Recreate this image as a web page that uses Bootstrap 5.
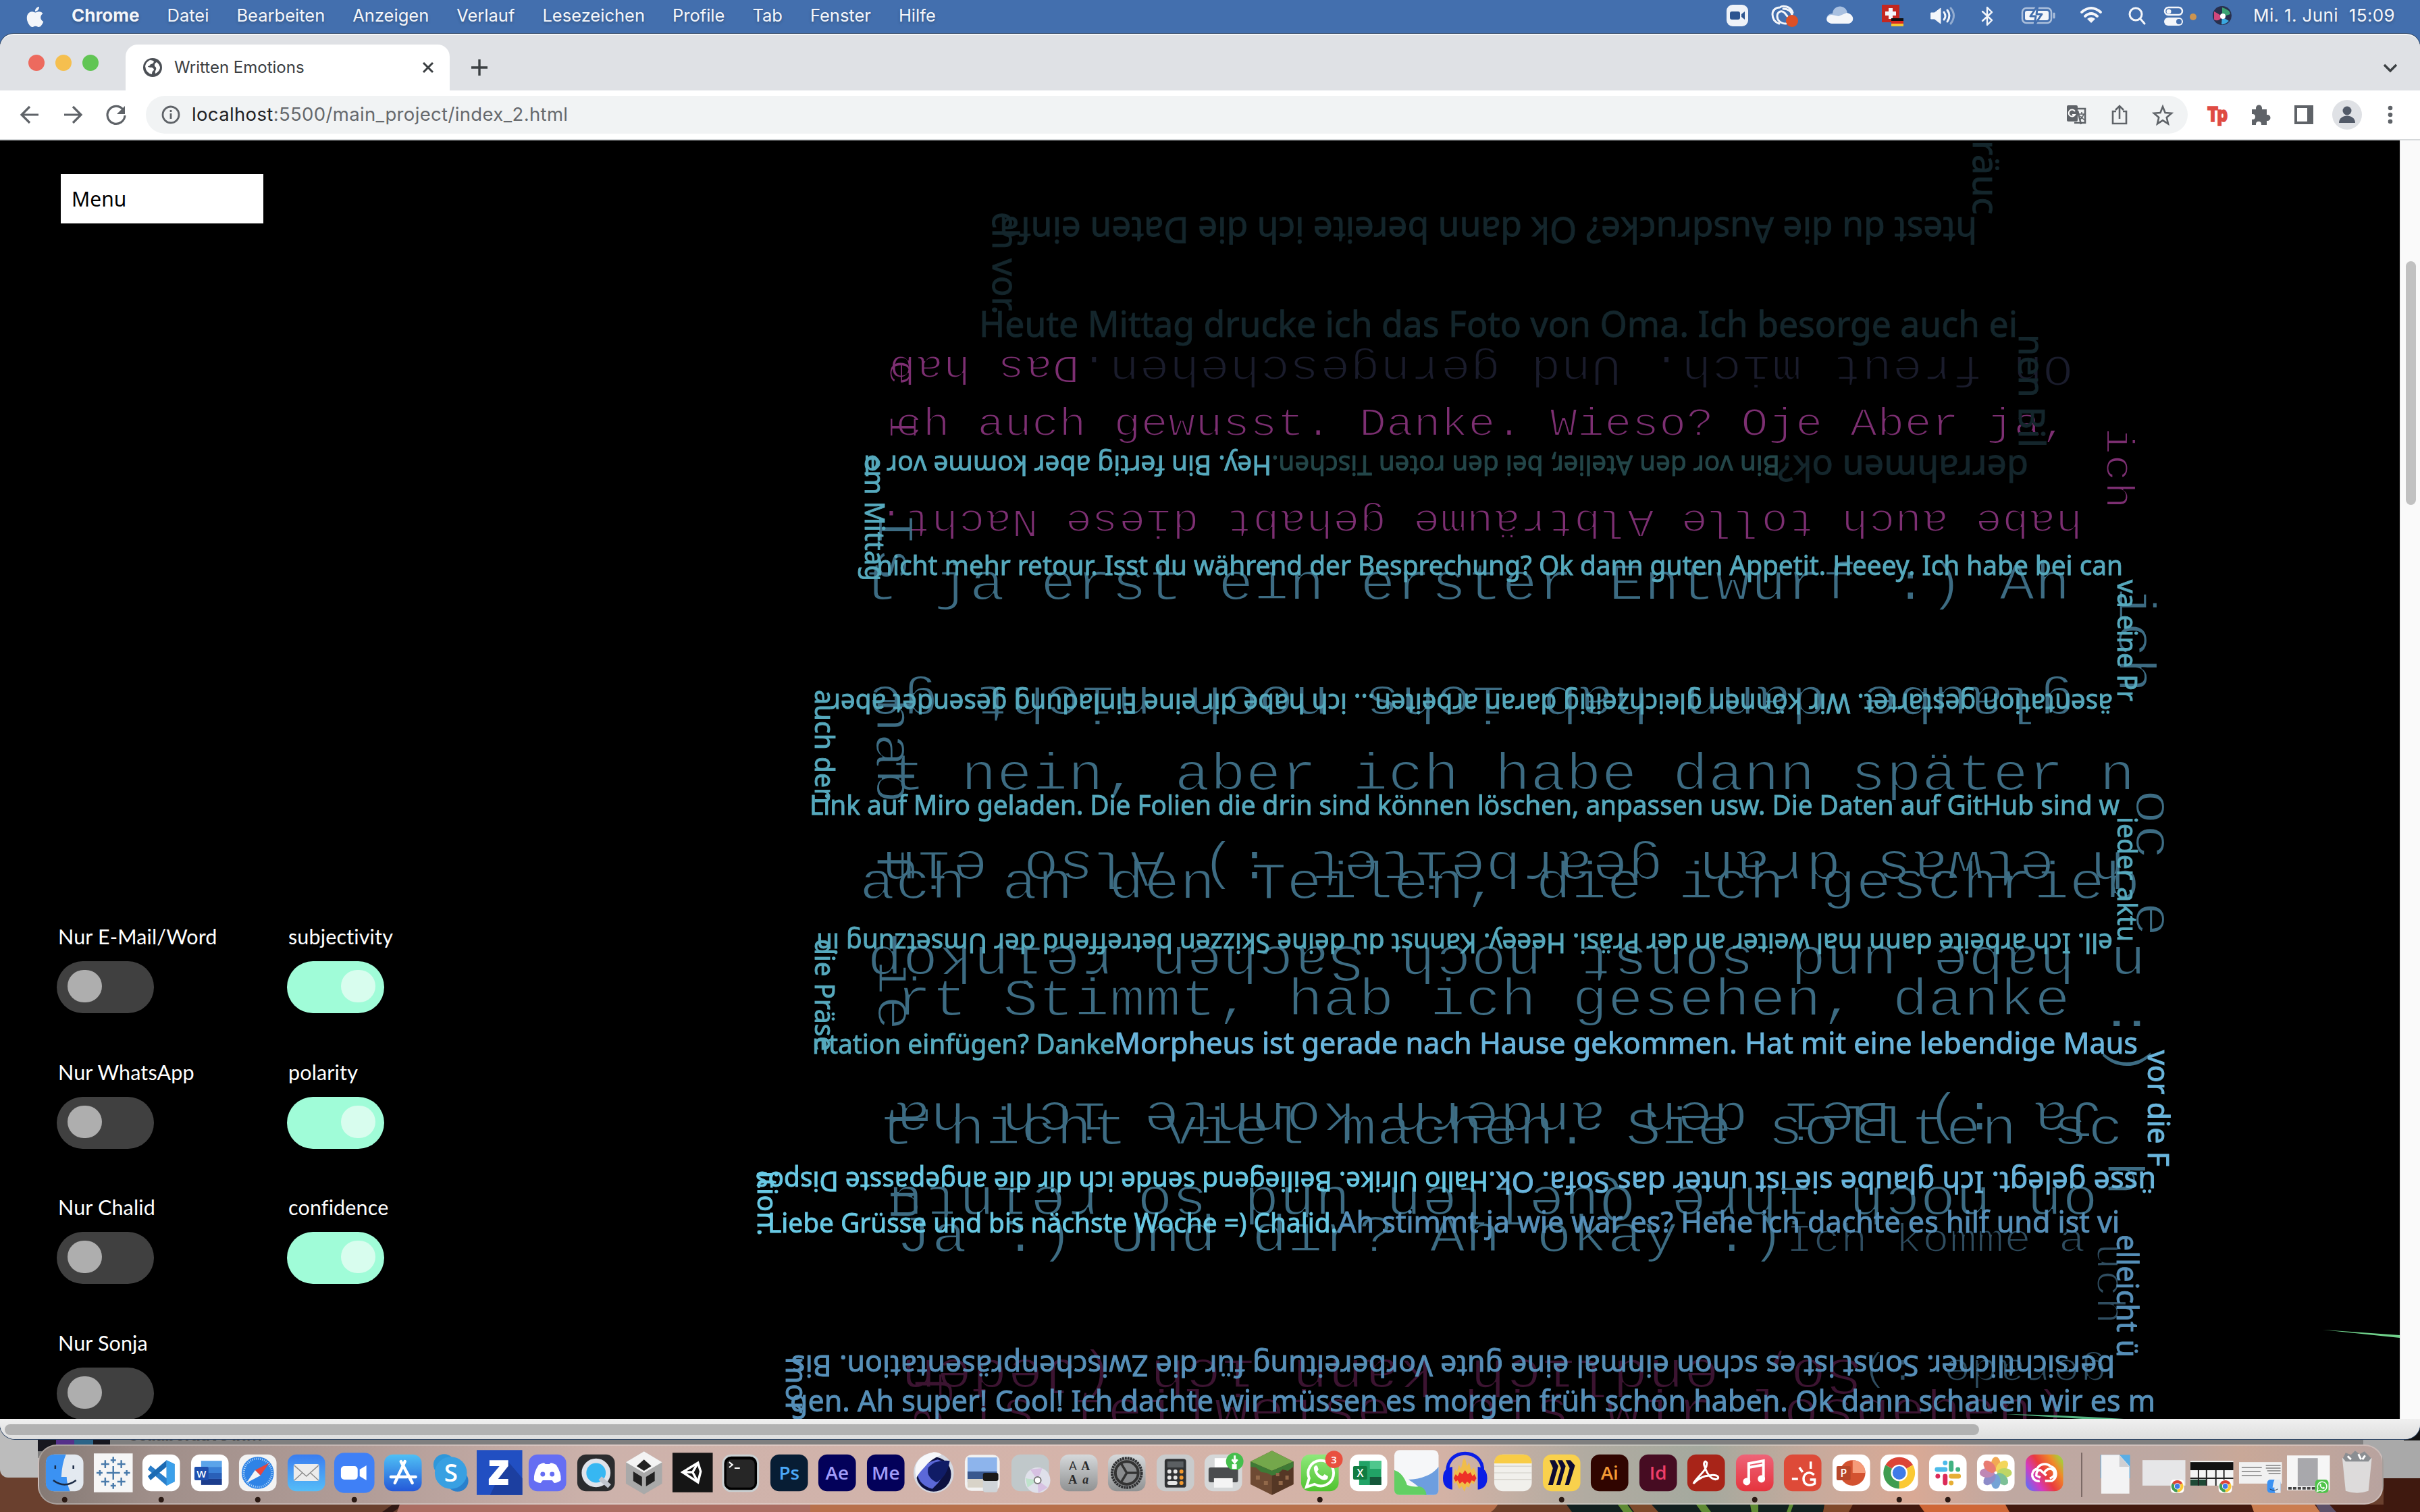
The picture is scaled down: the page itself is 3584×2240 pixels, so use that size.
<!DOCTYPE html>
<html lang="de">
<head>
<meta charset="utf-8">
<title>Written Emotions</title>
<link rel="stylesheet" href="https://cdn.jsdelivr.net/npm/bootstrap@5.3.0/dist/css/bootstrap.min.css">
<script src="https://cdn.jsdelivr.net/npm/bootstrap@5.3.0/dist/js/bootstrap.bundle.min.js"></script>
<style>
body{width:3584px;height:2240px;overflow:hidden;font-family:Inter,"Liberation Sans",sans-serif;background:#663f2d}
svg{display:block;flex:none}
.desktop{left:0;top:0;z-index:0}
.screen{z-index:1;width:3584px;height:2240px}
.osbar{height:50px;background:#436fae;color:#f4f6fa;font-size:25.5px;line-height:46px;padding:0 37px 4px 37px;text-shadow:0 2px 4px rgba(0,0,0,.25);white-space:nowrap}
.osbar .apple{width:30px;height:36px;margin-right:39px;margin-top:4px}
.osbar .entry{display:block;margin-right:41px}
.osbar b.entry{font-size:26px}
.osbar .clock{margin-left:16px;font-size:26px;letter-spacing:.35px}
.win{height:2082px;border-radius:20px 20px 22px 22px;overflow:hidden;background:#f3f3f3;border-top:2px solid #f6f7f8;box-shadow:0 0 0 1px #2e4565}
.tabstrip{height:82px;background:#dfe1e5;padding-top:14px}
.lights{width:186px;padding:15px 0 0 42px;gap:16px}
.light{width:24px;height:24px;border-radius:50%}
.ctab{width:480px;height:68px;background:#fff;border-radius:18px 18px 0 0;padding:0 22px 0 25px;font-size:24px;color:#3c4043}
.toolbar2{height:74px;background:#fff;border-bottom:2px solid #d5d8da;padding:0 0 0 24px}
.omni{width:3024px;height:56px;border-radius:28px;background:#f1f3f4;padding-left:22px;font-size:27.5px;color:#66696d;margin-top:-1px}
.pagebox{height:1894px}
.page{width:3554px;background:#000;color:#fff;position:relative;overflow:hidden}
.rail{width:30px;background:#fafafa;border-left:1px solid #e4e4e4;padding:179px 0 0 8px}
.rail .thumb{width:15px;height:361px;border-radius:8px;background:#c1c1c1}
.hrail{height:30px;background:linear-gradient(#f0f0f0,#dedede);padding:8px 0 0 7px}
.hrail .thumb{width:2924px;height:16px;border-radius:8px;background:#b2b2b2}
.controls{padding:50px 0 0 84px}
.menubox{width:300px;height:73px;margin-left:6px;background:#fff;color:#000;font:30px "Noto Sans",sans-serif;line-height:73px;padding-left:16px}
.switches{margin-top:1031px;font-family:Lato,sans-serif;font-size:30.5px}
.switchcol{width:341px}
.sw{height:200.7px}
.sw .cap{height:62px;line-height:50px;padding-left:2px;white-space:nowrap;letter-spacing:.15px}
.tog{width:144px;height:77px;border-radius:39px;background:#404040;padding:13px 0 0 16px}
.tog i{display:block;width:51px;height:48px;border-radius:24px;background:#aeaeae}
.tog.lit{background:#a0fcd8;padding-left:80px}
.tog.lit i{background:#d8fdee}
.poem{left:0;top:0;isolation:isolate}
.sn{font-family:"Noto Sans",sans-serif;stroke-width:.9}
/* the black outline thins the monospace strokes; lighten drops it again where lines cross */
.mo{font-family:"Liberation Mono",monospace;stroke:#000;stroke-width:2.2}
.mo text{mix-blend-mode:lighten}
.dock{height:89px;margin:8px 54px 0 56px;border-radius:28px;border:2px solid rgba(255,255,255,.28);padding-left:2px;
background:linear-gradient(90deg,#857a75 0,#a08f8a 5%,#b29d98 14%,#cdb2ab 24%,#d5b4aa 45%,#d3b2a5 60%,#b1aba1 66%,#a4a99e 71%,#c8aa9c 76%,#d9a995 80%,#bfa8a1 84%,#bda8a2 91%,#c9a898 94%,#b8a39f 100%)}
.dock svg{width:71.5px;height:90px;margin-top:-2px}
.dock text{font-family:"Open Sans",sans-serif;font-weight:600;text-anchor:middle}
</style>
</head>
<body>
<svg class="desktop position-absolute" width="3584" height="2240">
<rect width="3584" height="2240" fill="#436fae"/>
<rect y="2080" width="3584" height="160" fill="#6a402e"/>
<rect y="2070" width="80" height="119" rx="12" fill="#bcbcbc"/>
<rect x="56" y="2100" width="3528" height="60" fill="#7f7f7f"/>
<rect x="3500" y="2100" width="84" height="90" fill="#a9a9a9"/>
<path d="M3560 2100h24v34h-24z" fill="#111"/>
<rect x="56" y="2100" width="107" height="50" fill="#17171f"/><rect x="83" y="2120" width="28" height="30" fill="#55308a"/><rect x="110" y="2120" width="28" height="30" fill="#2b6488"/>
<text x="190" y="2134" font-family="Inter,sans-serif" font-weight="700" font-size="25" fill="#2e2e2e" textLength="199">collaborative in…</text>
<path d="M580 2230l24-2h-4l-18 12h-16z" fill="#311814"/><path d="M602 2200H1500V2240H588z" fill="#ab6d62"/>
<path d="M1200 2200H2240L2210 2240H1200z" fill="#b8704b"/><path d="M2222 2229h150v11h-164z" fill="#6d3f28"/>
<path d="M2320 2229h420v11h-412z" fill="#12201f"/><path d="M2396 2229h14l8 11h-14zM2512 2229h14l8 11h-14zM2592 2229h12v11h-10zM2650 2229h6l-4 11h-6z" fill="#5f8b34"/><path d="M2412 2229h34l10 11h-36z" fill="#7d4a2b"/>
<path d="M2702 2229H3584V2240H2700z" fill="#43190e"/><path d="M2702 2229h42l-6 11h-38z" fill="#80492b"/><path d="M2842 2229h128l6 11h-126z" fill="#cf6737"/><path d="M3334 2229h94l8 11h-98z" fill="#cb7d50"/><path d="M3430 2229h20l10 11h-24z" fill="#5d5068"/>
<path d="M3530 2190h54v50h-54z" fill="#3f190f"/>
</svg>
<div class="screen position-relative d-flex flex-column">

<nav class="osbar d-flex align-items-center">
<svg class="apple" viewBox="0 0 16 16"><path fill="#f4f6fa" d="M11.182.008C11.148-.03 9.923.023 8.857 1.18c-1.066 1.156-.902 2.482-.878 2.516s1.52.087 2.475-1.258.762-2.391.728-2.43m3.314 11.733c-.048-.096-2.325-1.234-2.113-3.422s1.675-2.789 1.698-2.854-.597-.79-1.254-1.157a3.7 3.7 0 0 0-1.563-.434c-.108-.003-.483-.095-1.254.116-.508.139-1.653.589-1.968.607-.316.018-1.256-.522-2.267-.665-.647-.125-1.333.131-1.824.328-.49.196-1.422.754-2.074 2.237-.652 1.482-.311 3.83-.067 4.56s.625 1.924 1.273 2.796c.576.984 1.34 1.667 1.659 1.899s1.219.386 1.843.067c.502-.308 1.408-.485 1.766-.472.357.013 1.061.154 1.782.539.571.197 1.111.115 1.652-.105.541-.221 1.324-1.059 2.238-2.758q.52-1.185.473-1.282"/></svg>
<b class="entry">Chrome</b><span class="entry">Datei</span><span class="entry">Bearbeiten</span><span class="entry">Anzeigen</span><span class="entry">Verlauf</span><span class="entry">Lesezeichen</span><span class="entry">Profile</span><span class="entry">Tab</span><span class="entry">Fenster</span><span class="entry">Hilfe</span>
<svg class="ms-auto" width="780" height="46" viewBox="2540 1 780 46" fill="none" stroke="#f4f6fa" stroke-width="3" stroke-linecap="round" stroke-linejoin="round">
<rect x="2556" y="8" width="32" height="32" rx="9" fill="#eef2f8" stroke="none"/><rect x="2561" y="18" width="15" height="12" rx="3" fill="#2d5590" stroke="none"/><path d="M2578 22l5-4v12l-5-4z" fill="#2d5590" stroke="none"/>
<path d="M2634 36c-6-2-10-7-10-14 0-6 5-10 11-10 3-3 16-3 19 8M2644 36c-8 0-13-5-13-11s6-10 11-5l4 5M2640 14c6 0 12 3 13 9"/><circle cx="2653" cy="32" r="9" fill="#dd5026" stroke="none"/>
<path d="M2712 36c-12-2-9-15 1-15 1-14 21-14 22 0 10 1 11 14 1 15z" fill="#a9c0e0" stroke="none"/><path d="M2712 36c-12-2-8-13 0-13l10 2 12-5c12 2 12 15 2 16z" fill="#f4f6fa" stroke="none"/>
<rect x="2786" y="8" width="26" height="26" fill="#c5271f" stroke="none"/><path d="M2799 13v16M2791 21h16" stroke-width="6" stroke-linecap="butt"/><path d="M2800 28h18v4h-18z" fill="#111" stroke="none"/><path d="M2800 32h18v4h-18z" fill="#d8281f" stroke="none"/><path d="M2800 36h18v4h-18z" fill="#f2c733" stroke="none"/>
<path d="M2859 20h5l9-7v23l-9-7h-5z" fill="#f4f6fa" stroke-width="1"/><path d="M2878 19q4 6 0 11M2883 16q6 8 0 17"/><path d="M2888 13q9 11 0 23" opacity=".45"/>
<path d="M2935 18l14 13-7 7V12l7 7-14 13" stroke-width="2.4"/>
<rect x="2994" y="13" width="43" height="22" rx="6" opacity=".6" stroke-width="2.5"/><rect x="2998" y="17" width="35" height="14" rx="3" fill="#f4f6fa" stroke="none"/><path d="M3041 21v6" opacity=".6"/><path d="M3017 9l-11 16h8l-2 13 11-16h-8z" fill="#f4f6fa" stroke="#436fae"/>
<path d="M3082 19q14-12 28 0M3087 25q9-8 18 0" stroke-width="4"/><path d="M3090 29l6 6 6-6q-6-5-12 0" fill="#f4f6fa" stroke="none"/>
<circle cx="3162" cy="22" r="9"/><path d="M3169 29l6 7"/>
<rect x="3205" y="12" width="26" height="11" rx="5.5" stroke-width="2.5"/><circle cx="3211" cy="18" r="3.5" fill="#f4f6fa" stroke="none"/><rect x="3204" y="27" width="28" height="12" rx="6" fill="#f4f6fa" stroke="none"/><circle cx="3226" cy="33" r="4" fill="#436fae" stroke="none"/>
<circle cx="3247" cy="26" r="5" fill="#cc9450" stroke="none"/>
<circle cx="3290" cy="24" r="14" fill="#29304e" stroke="none"/><path d="M3278 18q8 4 12 8-6 8-12 4z" fill="#d0477c" stroke="none"/><path d="M3290 12q12 4 12 10l-12 4z" fill="#3ba274" stroke="none"/><path d="M3290 26l10 6q-6 6-11 5z" fill="#3aa7e0" stroke="none"/><circle cx="3291" cy="25" r="4" fill="#fff" stroke="none"/>
</svg>
<span class="clock">Mi. 1. Juni&ensp;&hairsp;15:09</span>
</nav>

<main class="win">
<div class="tabstrip d-flex">
<div class="lights d-flex align-items-start"><span class="light" style="background:#ed6a5e"></span><span class="light" style="background:#f5bf4f"></span><span class="light" style="background:#61c554"></span></div>
<div class="ctab d-flex align-items-center">
<svg width="30" height="30" viewBox="0 0 30 30"><circle cx="15" cy="15" r="14" fill="#4b4f55"/><path d="M4 13q1-6 7-9 4 0 6 2-1 4-5 4-1 3-4 3 0 2 6 2 3 1 3 4-3 1-3 6-9-2-10-12zM21 7q5 4 5 9-2 6-7 8-1-3 1-6 1-3-2-5-1-4 3-6z" fill="#fff"/></svg>
<span style="margin-left:17px">Written Emotions</span>
<svg class="ms-auto" width="20" height="20" viewBox="0 0 20 20"><path d="M3 3l14 14M17 3L3 17" stroke="#3c4043" stroke-width="3"/></svg>
</div>
<svg width="90" height="68" viewBox="0 0 90 68"><path d="M44 22v24M32 34h24" stroke="#3c4043" stroke-width="3.4"/></svg>
<svg class="ms-auto" width="70" height="68"><path d="M17 30l9 9 9-9" fill="none" stroke="#3c4043" stroke-width="3.4"/></svg>
</div>
<div class="toolbar2 d-flex align-items-center">
<svg width="192" height="72" viewBox="24 134 192 72" fill="none" stroke="#5f6368" stroke-width="3.2"><path d="M57 170H33M44 158l-12 12 12 12M95 170h24M108 158l12 12-12 12M182 162a13 13 0 1 0 3 9"/><path d="M185 157v12h-12z" fill="#5f6368" stroke="none"/></svg>
<div class="omni d-flex align-items-center"><svg width="30" height="30" viewBox="0 0 30 30"><circle cx="15" cy="15" r="12" fill="none" stroke="#5f6368" stroke-width="2.8"/><path d="M15 13v8M15 8v3" stroke="#5f6368" stroke-width="2.8"/></svg><span style="margin-left:16px;letter-spacing:.35px"><span style="color:#202124">localhost</span>:5500/main_project/index_2.html</span>
<svg class="ms-auto" style="margin-right:18px" width="170" height="56" viewBox="3053 142 170 56" fill="none" stroke="#5f6368" stroke-width="2.6">
<path d="M3070 161h19v21h-16" /><rect x="3062" y="156" width="16" height="24" rx="2" fill="#5f6368" stroke="none"/><path d="M3078 164l5 20" /><path d="M3074 165a5 5 0 1 0 0 5h-4" stroke="#fff" stroke-width="2"/><path d="M3080 169h8M3084 166v3M3087 169q-2 6-6 8M3082 172l6 6" stroke-width="1.6"/>
<path d="M3135 165h-5v18h20v-18h-5M3140 176v-18M3134 163l6-6 6 6"/>
<path d="M3204 158l3.6 9 9.400.8-7.200 6.200 2.200 9.400-8-5-8 5 2.200-9.400-7.200-6.200 9.400-.8z"/></svg></div>
<svg width="320" height="72" viewBox="3240 134 320 72" fill="#5f6368">
<text x="3269" y="180" font-family="Inter,sans-serif" font-weight="900" font-size="30" fill="#df4b43" stroke="#df4b43" stroke-width="1.500" textLength="30" lengthAdjust="spacingAndGlyphs">Tp</text>
<path d="M3335 162h6v-2a4 4 0 0 1 9 0v2h7v8h1a4.500 4.500 0 0 1 0 9h-1v6h-8v-1a4 4 0 0 0-8 0v1h-6v-8h1a4 4 0 0 0 0-8h-1z"/>
<path d="M3398 156h28v28h-28zM3402 160v20h15v-20z" fill-rule="evenodd"/>
<circle cx="3476" cy="170" r="22" fill="#dfe1e5"/><circle cx="3476" cy="164" r="6.500" fill="#525a68"/><path d="M3464 182c0-14 24-14 24 0z" fill="#525a68"/>
<circle cx="3540" cy="160" r="3.300"/><circle cx="3540" cy="170" r="3.300"/><circle cx="3540" cy="180" r="3.300"/></svg>
</div>

<div class="pagebox d-flex">
<section class="page">
<svg class="poem position-absolute" width="3554" height="1894" viewBox="0 208 3554 1894">
<g class="mo" font-size="65" fill="#1a1c2c"><text transform="translate(3070 528) rotate(180)" textLength="1472" lengthAdjust="spacingAndGlyphs">Oh freut mich. Und gerngeschehen.</text></g>
<g class="mo" font-size="60" fill="#7d2f72">
<text transform="translate(1599 528) rotate(180)" textLength="283" lengthAdjust="spacingAndGlyphs">Das hab</text>
<text transform="translate(1318 532) rotate(90)" textLength="121" lengthAdjust="spacingAndGlyphs">e I</text>
<text transform="translate(1326 645)" textLength="1737" lengthAdjust="spacingAndGlyphs">ch auch gewusst. Danke. Wieso? Oje Aber ja,</text>
<text transform="translate(3120 633) rotate(90)" textLength="121" lengthAdjust="spacingAndGlyphs">ich</text>
<text transform="translate(3084 756) rotate(180)" textLength="1784" lengthAdjust="spacingAndGlyphs">habe auch tolle Albträume gehabt diese Nacht.</text>
</g>
<g class="mo" font-size="77" fill="#3d6c83">
<text transform="translate(1301 758) rotate(90)" textLength="105" lengthAdjust="spacingAndGlyphs">Is</text>
<text transform="translate(1278 888)" textLength="1788" lengthAdjust="spacingAndGlyphs">t ja erst ein erster Entwurf :) Ah</text>
<text transform="translate(3138 869) rotate(90)" textLength="158" lengthAdjust="spacingAndGlyphs">ich</text>
<text transform="translate(3073 1017) rotate(180)" textLength="1788" lengthAdjust="spacingAndGlyphs">glaube dann hab ichs noch nicht ge</text>
<text transform="translate(1298 1033) rotate(90)" textLength="158" lengthAdjust="spacingAndGlyphs">hab</text>
<text transform="translate(1318 1170)" textLength="1844" lengthAdjust="spacingAndGlyphs">t nein, aber ich habe dann später n</text>
<text transform="translate(3164 1169) rotate(90)" textLength="105" lengthAdjust="spacingAndGlyphs">oc</text>
<text transform="translate(3148 1261) rotate(180)" textLength="1843" lengthAdjust="spacingAndGlyphs">h etwas dran gearbeitet :) Also ein</text>
<text transform="translate(1298 1256) rotate(90)" textLength="52" lengthAdjust="spacingAndGlyphs">f</text>
<text transform="translate(1273 1331)" textLength="1897" lengthAdjust="spacingAndGlyphs">ach an den Teilen, die ich geschrieb</text>
<text transform="translate(3164 1336) rotate(90)" textLength="52" lengthAdjust="spacingAndGlyphs">e</text>
<text transform="translate(3178 1402) rotate(180)" textLength="1894" lengthAdjust="spacingAndGlyphs">n habe und sonst noch Sachen reinkop</text>
<text transform="translate(1301 1422) rotate(90)" textLength="105" lengthAdjust="spacingAndGlyphs">ie</text>
<text transform="translate(1327 1504)" textLength="1739" lengthAdjust="spacingAndGlyphs">rt Stimmt, hab ich gesehen, danke</text>
<text transform="translate(3129 1490) rotate(90)" textLength="105" lengthAdjust="spacingAndGlyphs">:)</text>
<text transform="translate(3116 1633) rotate(180)" textLength="1791" lengthAdjust="spacingAndGlyphs">Ja :) Bei den andern konnte ich ha</text>
<text transform="translate(1318 1631) rotate(90)" textLength="52" lengthAdjust="spacingAndGlyphs">l</text>
<text transform="translate(1301 1695)" textLength="1844" lengthAdjust="spacingAndGlyphs">t nicht viel machen. Sie sollten sc</text>
<text transform="translate(3121 1720) rotate(90)" textLength="52" lengthAdjust="spacingAndGlyphs">h</text>
<text transform="translate(3107 1758) rotate(180)" textLength="1792" lengthAdjust="spacingAndGlyphs">on noch ihre Quellen und so reintu</text>
<text transform="translate(1318 1758) rotate(90)" textLength="52" lengthAdjust="spacingAndGlyphs">n</text>
<text transform="translate(1327 1854)" textLength="1317" lengthAdjust="spacingAndGlyphs">Ja :) Und dir? Ah okay :)</text>
</g>
<g class="mo" font-size="60" fill="#2f4d60">
<text transform="translate(2645 1854)" textLength="444" lengthAdjust="spacingAndGlyphs">Ich komme a</text>
<text transform="translate(3106 1841) rotate(90)" textLength="121" lengthAdjust="spacingAndGlyphs">uch</text>
<text transform="translate(3121 2014) rotate(180)" textLength="364" lengthAdjust="spacingAndGlyphs">gerade :)</text>
</g>
<g class="mo" font-size="77" fill="#3c1431">
<text transform="translate(2757 2014) rotate(180)" textLength="1423" lengthAdjust="spacingAndGlyphs">So, endlich kann ich (Jeden</text>
<text transform="translate(1354 2029) rotate(90)" textLength="105" lengthAdjust="spacingAndGlyphs">fa</text>
<text transform="translate(1429 2114)" textLength="1634" lengthAdjust="spacingAndGlyphs" xml:space="preserve">ls teilweise  bis wir losgehen)</text>
</g>
<g class="sn" font-size="52.500" fill="#14262c" stroke="#14262c">
<text transform="translate(2922 208) rotate(90)" textLength="110" lengthAdjust="spacingAndGlyphs">räuc</text>
<text transform="translate(2928 322) rotate(180)" textLength="1448" lengthAdjust="spacingAndGlyphs">htest du die Ausdrucke? Ok dann bereite ich die Daten einfa</text>
<text transform="translate(1470 314) rotate(90)" textLength="152" lengthAdjust="spacingAndGlyphs">ch vor.</text>
<text transform="translate(1450 499)" textLength="1538" lengthAdjust="spacingAndGlyphs">Heute Mittag drucke ich das Foto von Oma. Ich besorge auch ei</text>
<text transform="translate(2990 495) rotate(90)" textLength="168" lengthAdjust="spacingAndGlyphs">nen Bil</text>
<text transform="translate(3004 675) rotate(180)" textLength="371" lengthAdjust="spacingAndGlyphs">derrahmen ok?</text>
</g>
<g class="sn" font-size="40"><text fill="#234649" stroke="#234649" transform="translate(2636 675) rotate(180)" textLength="753" lengthAdjust="spacingAndGlyphs">Bin vor den Atelier, bei den roten Tischen.</text></g>
<g class="sn" font-size="40" fill="#56a9bd" stroke="#56a9bd">
<text transform="translate(1883 675) rotate(180)" textLength="604" lengthAdjust="spacingAndGlyphs">Hey. Bin fertig aber komme vor d</text>
<text transform="translate(1281 675) rotate(90)" textLength="186" lengthAdjust="spacingAndGlyphs">em Mittag</text>
<text transform="translate(1298 852)" textLength="1846" lengthAdjust="spacingAndGlyphs">nicht mehr retour. Isst du während der Besprechung? Ok dann guten Appetit. Heeey. Ich habe bei can</text>
<text transform="translate(3136 859) rotate(90)" textLength="180" lengthAdjust="spacingAndGlyphs">va eine Pr</text>
<text transform="translate(3129 1028) rotate(180)" textLength="1900" lengthAdjust="spacingAndGlyphs">äsentation gestartet. Wir können gleichzeitig daran arbeiten... ich habe dir eine Einladung gesendet aber</text>
<text transform="translate(1207 1022) rotate(90)" textLength="169" lengthAdjust="spacingAndGlyphs">auch den</text>
<text transform="translate(1199 1207)" textLength="1940" lengthAdjust="spacingAndGlyphs">Link auf Miro geladen. Die Folien die drin sind können löschen, anpassen usw. Die Daten auf GitHub sind w</text>
<text transform="translate(3136 1210) rotate(90)" textLength="185" lengthAdjust="spacingAndGlyphs">ieder aktu</text>
<text transform="translate(3129 1383) rotate(180)" textLength="1920" lengthAdjust="spacingAndGlyphs">ell. Ich arbeite dann mal weiter an der Präsi. Heeey. Kannst du deine Skizzen betreffend der Umsetzung in</text>
<text transform="translate(1207 1391) rotate(90)" textLength="166" lengthAdjust="spacingAndGlyphs">die Präse</text>
<text transform="translate(1203 1561)" textLength="448" lengthAdjust="spacingAndGlyphs">ntation einfügen? Danke</text>
</g>
<g class="sn" font-size="43.500" fill="#6ab5dc" stroke="#6ab5dc">
<text transform="translate(1650 1561)" textLength="1516" lengthAdjust="spacingAndGlyphs">Morpheus ist gerade nach Hause gekommen. Hat mit eine lebendige Maus</text>
<text transform="translate(3181 1556) rotate(90)" textLength="172" lengthAdjust="spacingAndGlyphs">vor die F</text>
<text transform="translate(3193 1736) rotate(180)" textLength="989" lengthAdjust="spacingAndGlyphs">üsse gelegt. Ich glaube sie ist unter das Sofa. Ok.</text>
</g>
<g class="sn" font-size="40" fill="#69c9e4" stroke="#69c9e4">
<text transform="translate(2204 1736) rotate(180)" textLength="1085" lengthAdjust="spacingAndGlyphs">Hallo Ulrike. Beiliegend sende ich dir die angepasste Dispos</text>
<text transform="translate(1122 1735) rotate(90)" textLength="96" lengthAdjust="spacingAndGlyphs">ition.</text>
<text transform="translate(1137 1826)" textLength="844" lengthAdjust="spacingAndGlyphs">Liebe Grüsse und bis nächste Woche =) Chalid.</text>
</g>
<g class="sn" font-size="43" fill="#568fb8" stroke="#568fb8">
<text transform="translate(1981 1826)" textLength="1158" lengthAdjust="spacingAndGlyphs">Ah stimmt ja wie war es? Hehe ich dachte es hilf und ist vi</text>
<text transform="translate(3135 1829) rotate(90)" textLength="182" lengthAdjust="spacingAndGlyphs">elleicht ü</text>
<text transform="translate(3132 2008) rotate(180)" textLength="1960" lengthAdjust="spacingAndGlyphs">bersichtlicher. Sonst ist es schon einmal eine gute Vorbereitung für die Zwischenpräsentation. Bis</text>
<text transform="translate(1164 2010) rotate(90)" textLength="84" lengthAdjust="spacingAndGlyphs">mor</text>
<text transform="translate(1170 2091)" textLength="2022" lengthAdjust="spacingAndGlyphs">gen. Ah super! Cool! Ich dachte wir müssen es morgen früh schon haben. Ok dann schauen wir es m</text>
</g>
<path d="M3440 1970l114 8v4z" fill="#6fd08a"/><path d="M2970 2095q90 1 190 8h-60z" fill="#55b583"/>
</svg>
<div class="controls position-relative">
<div class="menubox">Menu</div>
<div class="switches d-flex">
<div class="switchcol">
<div class="sw"><div class="cap">Nur E-Mail/Word</div><div class="tog"><i></i></div></div>
<div class="sw"><div class="cap">Nur WhatsApp</div><div class="tog"><i></i></div></div>
<div class="sw"><div class="cap">Nur Chalid</div><div class="tog"><i></i></div></div>
<div class="sw"><div class="cap">Nur Sonja</div><div class="tog"><i></i></div></div>
</div>
<div class="switchcol">
<div class="sw"><div class="cap">subjectivity</div><div class="tog lit"><i></i></div></div>
<div class="sw"><div class="cap">polarity</div><div class="tog lit"><i></i></div></div>
<div class="sw"><div class="cap">confidence</div><div class="tog lit"><i></i></div></div>
</div>
</div>
</div>
</section>
<div class="rail"><div class="thumb"></div></div>
</div>
<div class="hrail"><div class="thumb"></div></div>
</main>

<svg width="0" height="0" class="position-absolute"><defs>
<rect id="sq" x="-28" y="-27.500" width="56" height="55" rx="13"/>
<circle id="dt" cy="40" r="4" fill="#2b1a14"/>
<linearGradient id="gb" x2="0" y2="1"><stop stop-color="#3b7df0"/><stop offset="1" stop-color="#55bdf8"/></linearGradient>
<linearGradient id="ga" x2="0" y2="1"><stop stop-color="#4fc0f5"/><stop offset="1" stop-color="#2458d8"/></linearGradient>
<linearGradient id="gg" x2="0" y2="1"><stop stop-color="#d6d9db"/><stop offset="1" stop-color="#8f9192"/></linearGradient>
<linearGradient id="gm" x2="0" y2="1"><stop stop-color="#ee6478"/><stop offset="1" stop-color="#e5343d"/></linearGradient>
<linearGradient id="gw" x2="0" y2="1"><stop stop-color="#8fe97c"/><stop offset="1" stop-color="#4fc22e"/></linearGradient>
<linearGradient id="gc" x1="0" y1=".8" x2="1" y2=".2"><stop stop-color="#6a6af0"/><stop offset=".25" stop-color="#d23bc0"/><stop offset=".5" stop-color="#ea3a3e"/><stop offset=".8" stop-color="#f08a28"/><stop offset="1" stop-color="#a5cf3c"/></linearGradient>
<g id="chr"><circle r="20" fill="#fff"/><path d="M0 0L-17.300-10A20 20 0 0 1 17.300-10z" fill="#dc4437"/><path d="M0 0L17.300-10A20 20 0 0 1 0 20z" fill="#fbc934"/><path d="M0 0L0 20A20 20 0 0 1-17.300-10z" fill="#3f9c50"/><circle r="10.500" fill="#fff"/><circle r="8.500" fill="#3f7be8"/></g>
<g id="wa"><path d="M-20 21l4-13a19 19 0 1 1 8 9z" fill="none" stroke="#fff" stroke-width="4"/><path d="M-9-8c2-4 5-4 6 0l1 3-2 3c1 3 5 6 8 7l3-3 5 3c1 5-5 7-9 5-7-3-12-10-12-18z" fill="#fff"/></g>
</defs></svg>
<footer class="dock d-flex">
<svg viewBox="-36 -42 72 90"><use href="#sq" fill="#e3e9f0"/><path d="M2-27.500H-15Q-28-27-28-15V15Q-28 27-15 27.500H8Q3 15 3 6H-5Q-4-14 2-27.500z" fill="#3b92f3"/><path d="M-14-11v5M13-11v5M-17 11Q0 24 17 11" stroke="#1a2a44" stroke-width="2.500" fill="none"/><use href="#dt"/></svg>
<svg viewBox="-36 -42 72 90"><rect x="-29" y="-29" width="58" height="58" fill="#f6f6f6"/><path d="M0-10V10M-10 0H10M-12-19v12M-18-13h12M12-19v12M6-13H18M-12 7v12M-18 13h12M12 7v12M6 13H18M0-24v9M-4-19H4M0 15v9M-4 19H4M-25 0h9M-20-4v8M16 0h9M20-4v8" stroke="#4a7bab" stroke-width="2.500"/></svg>
<svg viewBox="-36 -42 72 90"><use href="#sq" fill="#fff"/><path d="M8-19L20-13V13L8 19-20-5l4-6L8 8z" fill="#2a7fcb"/><path d="M8-19v10L-16 11l-4-6z" fill="#1b6ab3"/><path d="M8-19L20-13V13L8 19z" fill="#3ba0ea"/><use href="#dt"/></svg>
<svg viewBox="-36 -42 72 90"><use href="#sq" fill="#fff"/><path d="M-13-18H18V-9H-13z" fill="#5ba4ea"/><path d="M-13-9H18V0H-13z" fill="#3a80d6"/><path d="M-13 0H18V9H-13z" fill="#2960b8"/><path d="M-13 9H18V18H-13z" fill="#1c3d8d"/><rect x="-23" y="-9" width="21" height="20" rx="2" fill="#1e4fae"/><text x="-12.500" y="7" font-size="15" fill="#fff">W</text></svg>
<svg viewBox="-36 -42 72 90"><use href="#sq" fill="#f3f3f3"/><circle r="24" fill="#2f83e6"/><circle r="21" fill="none" stroke="#bfe0fb" stroke-width="3" stroke-dasharray="1 2"/><path d="M17-15L4 4-4-4z" fill="#e8453c"/><path d="M-17 15L4 4-4-4z" fill="#f3f3f3"/><use href="#dt"/></svg>
<svg viewBox="-36 -42 72 90"><use href="#sq" fill="url(#gb)"/><rect x="-19" y="-13" width="38" height="25" rx="3" fill="#ececec"/><path d="M-18-11L0 5 18-11M-18 11L-6 0M18 11L6 0" stroke="#8e8e8e" stroke-width="1.500" fill="none"/></svg>
<svg viewBox="-36 -42 72 90"><rect x="-30" y="-30" width="60" height="60" rx="15" fill="#3f80f6"/><rect x="-20" y="-10" width="25" height="20" rx="5" fill="#fff"/><path d="M8-5L18-11V11L8 5z" fill="#fff"/><use href="#dt"/></svg>
<svg viewBox="-36 -42 72 90"><use href="#sq" fill="url(#ga)"/><path d="M3-17L-12 15M-3-17L14 15M-18 6H6M11 6h8" stroke="#fff" stroke-width="4.500" stroke-linecap="round"/></svg>
<svg viewBox="-36 -42 72 90"><circle cx="-10" cy="-12" r="16" fill="#2f97da"/><circle cx="10" cy="12" r="16" fill="#2a80cc"/><circle r="24" fill="#38a0e2"/><text y="13" font-size="37" fill="#fff">S</text></svg>
<svg viewBox="-36 -42 72 90"><rect x="-34" y="-34" width="68" height="67" fill="#214fc2"/><path d="M11-19L34 8V33H-14z" fill="#1c3fa0"/><path d="M-15-19H13V-10L-2 9H13V18H-16V9L0-10H-15z" fill="#fff"/></svg>
<svg viewBox="-36 -42 72 90"><use href="#sq" fill="#656ef3"/><path d="M-13-12q5-3 8-3l2 2h6l2-2q3 0 8 3 8 12 7 23-5 4-10 4l-3-4h-14l-3 4q-5 0-10-4-1-11 7-23z" fill="#fff"/><circle cx="-7" cy="2" r="3.500" fill="#656ef3"/><circle cx="7" cy="2" r="3.500" fill="#656ef3"/></svg>
<svg viewBox="-36 -42 72 90"><use href="#sq" fill="#2b2c2e"/><circle r="18" fill="#36b7f2" stroke="#dfe3ea" stroke-width="7"/><path d="M6 8L20 20" stroke="#c0c5ce" stroke-width="7"/></svg>
<svg viewBox="-36 -42 72 90"><path d="M0-32L27-16V16L0 32-27 16V-16z" fill="#a9a9a9"/><path d="M0-32L27-16 0 0-27-16z" fill="#f4f4f4"/><path d="M0-20L11-10 0-3-11-10zM-16-2L-3 6V20L-16 12zM16-2L3 6V20L16 12z" fill="#222"/></svg>
<svg viewBox="-36 -42 72 90"><rect x="-30" y="-30" width="60" height="59" fill="#151515"/><path d="M-15-1L8-15 12-2 8 14zM-15-1H0L8-15M0-1L8 14" fill="none" stroke="#fff" stroke-width="3.500"/></svg>
<svg viewBox="-36 -42 72 90"><rect x="-26" y="-26" width="52" height="53" rx="12" fill="#000" stroke="#c9d0d2" stroke-width="3"/><rect x="-21" y="-20" width="42" height="42" rx="7" fill="#262626"/><path d="M-17-16l5 4-5 4M-9-7h8" stroke="#fff" stroke-width="2" fill="none"/></svg>
<svg viewBox="-36 -42 72 90"><use href="#sq" fill="#071d34"/><text y="10" font-size="28" fill="#4aa8f8">Ps</text></svg>
<svg viewBox="-36 -42 72 90"><use href="#sq" fill="#03015a"/><text y="10" font-size="28" fill="#a09cf9">Ae</text></svg>
<svg viewBox="-36 -42 72 90"><use href="#sq" fill="#03015a"/><text y="10" font-size="28" fill="#a09cf9">Me</text></svg>
<svg viewBox="-36 -42 72 90"><circle r="30" fill="#d5d9e2"/><ellipse cx="0" cy="2" rx="26" ry="26" fill="#0d1140"/><path d="M22-14Q16 8-2 24-22 18-24 2-18-14 6-20z" fill="#5b68d8"/><path d="M24-18Q20 6 4 14-12 6-8-8 2-20 24-18z" fill="#101c66"/><path d="M12-27Q-6-20-14-8-22 0-26 8-34-24 0-31 8-31 12-27z" fill="#f7f8fb"/></svg>
<svg viewBox="-36 -42 72 90"><rect x="-26" y="-27" width="52" height="54" rx="10" fill="#f2f2f2"/><rect x="-22" y="-23" width="44" height="26" fill="#8db4ec"/><path d="M-22-2H22V14H-22z" fill="#39588e"/><path d="M-22 9H10V22H-22z" fill="#d8d3c8"/><rect x="1" y="5" width="22" height="24" rx="4" fill="#cfd4d8"/><rect x="1" y="0" width="23" height="12" rx="3" fill="#191919"/></svg>
<svg viewBox="-36 -42 72 90"><use href="#sq" fill="#c0c8ca"/><circle cx="11" cy="11" r="19" fill="#dfe0ea"/><path d="M11 11L0-5 18-7zM11 11L26 22 12 30z" fill="#d5b9e0" opacity=".8"/><path d="M11 11L-7 8-4 22z" fill="#b6e3c4" opacity=".8"/><circle cx="11" cy="11" r="5" fill="#fff" stroke="#7a7a7a" stroke-width="2"/></svg>
<svg viewBox="-36 -42 72 90"><use href="#sq" fill="url(#gg)"/><g fill="#2a2a2a" font-size="18"><text x="-9" y="-4" style="font-weight:400">A</text><text x="10" y="-4" style="font-family:Liberation Serif;font-weight:700">A</text><text x="-9" y="16" style="font-family:Liberation Serif;font-weight:700">A</text><text x="10" y="16" style="font-family:Liberation Serif;font-style:italic">a</text></g></svg>
<svg viewBox="-36 -42 72 90"><use href="#sq" fill="url(#gg)"/><circle r="22" fill="#8a8c8e" stroke="#2e2f31" stroke-width="4" stroke-dasharray="3 1"/><circle r="17" fill="none" stroke="#333" stroke-width="4"/><path d="M0 0H17M0 0L-9-15M0 0L-9 15" stroke="#333" stroke-width="3.500"/></svg>
<svg viewBox="-36 -42 72 90"><use href="#sq" fill="#c9cbcc"/><rect x="-16" y="-21" width="32" height="43" rx="4" fill="#303234"/><rect x="-12" y="-17" width="24" height="9" fill="#5b5f62"/><g fill="#e5e5e5"><circle cx="-9" cy="-2" r="3"/><circle cy="-2" r="3"/><circle cx="-9" cy="7" r="3"/><circle cy="7" r="3"/><rect x="-12" y="12" width="15" height="6" rx="3"/></g><g fill="#f39a2f"><circle cx="9" cy="-2" r="3"/><circle cx="9" cy="7" r="3"/><circle cx="9" cy="15" r="3"/></g></svg>
<svg viewBox="-36 -42 72 90"><use href="#sq" fill="#d5d7d8"/><rect x="-13" y="-22" width="26" height="18" fill="#fff"/><rect x="-22" y="-8" width="44" height="22" rx="3" fill="#4a4c4e"/><rect x="-14" y="8" width="28" height="14" fill="#f4f4f4"/><circle cx="17" cy="-17" r="13" fill="#46bf4d"/><path d="M17-26v8M13-20l4 5 4-5" stroke="#fff" stroke-width="3" fill="none"/><rect x="13" y="-13" width="7" height="7" fill="#fff"/></svg>
<svg viewBox="-36 -42 72 90"><path d="M0-33L32-17V17L0 33-32 17V-17z" fill="#6e4a33"/><path d="M0-5L32-17V17L0 33z" fill="#553725"/><path d="M0-33L32-17 0-3-32-17z" fill="#74a74b"/><path d="M-32-17L0-3 32-17V-9L24-3 16-5 8 2 0 4-8 0-16-1-24-8-32-9z" fill="#3e7a35"/><path d="M-24 4h6v6h-6zM-12 12h6v6h-6zM10 12h6v6h-6zM20 4h5v6h-5zM6 0h5v5H6z" fill="#92694a"/></svg>
<svg viewBox="-36 -42 72 90"><use href="#sq" fill="url(#gw)"/><use href="#wa"/><circle cx="21" cy="-20" r="13" fill="#e9503f"/><text x="21" y="-14" font-size="15" fill="#fff">3</text><use href="#dt"/></svg>
<svg viewBox="-36 -42 72 90"><use href="#sq" fill="#fff"/><path d="M-14-18H19V18H-14z" fill="#21a366"/><path d="M2-18H19V-6H2z" fill="#4fc78d"/><path d="M2 6H19V18H2z" fill="#15573a"/><rect x="-23" y="-10" width="21" height="20" rx="2" fill="#107c41"/><text x="-12.500" y="6" font-size="16" fill="#fff">X</text></svg>
<svg viewBox="-36 -42 72 90"><rect x="-33" y="-34" width="66" height="67" rx="8" fill="#f6f7f9"/><path d="M-12 10Q2 10 16 4 26 0 33-9V26Q32 33 26 33H12Q8 22-12 10z" fill="#6d9edf"/><path d="M-33-4Q-20 0-14 18-4 22 4 20 14 22 15 33H-26Q-33 32-33 26z" fill="#62cf63"/></svg>
<svg viewBox="-36 -42 72 90"><path d="M-26-2C-28-38 28-38 26-2" fill="none" stroke="#0a1ee6" stroke-width="5"/><path d="M-17 4l2-10 3 4 3-10 3 6 3-14 3-2 3 12 3-6 3 12 4-4 4 10v5l-4 10-4-3-3 8-4-2-3 8-4-8-4 4-4-10-4 2z" fill="#f0bd4a"/><path d="M-17 8l3-6 3 3 3-6 4 3 4-6 4 6 4-3 3 6 3-3 3 6-3 5-4-2-3 5-4-3-3 4-4-4-4 3-3-5-3 2z" fill="#ee3127"/><path d="M-19-9v34q-14-2-14-17t14-17zM19-9v34q14-2 14-17t-14-17z" fill="#0a1ee6"/></svg>
<svg viewBox="-36 -42 72 90"><use href="#sq" fill="#f1f0ec"/><path d="M-28-14Q-28-27-15-27.500H15Q28-27 28-14z" fill="#f8cc46"/><path d="M-28-10H28M-28 0H28M-28 10H28" stroke="#cfcdc6" stroke-width="1.200"/></svg>
<svg viewBox="-36 -42 72 90"><use href="#sq" fill="#f9d14c"/><path d="M-18-19h8l5 9-8 28h-7l7-25zM-6-19h7l5 9-8 28h-6l7-25zM6-19h7l7 8-9 29h-6l7-25z" fill="#0d0b33"/><use href="#dt"/></svg>
<svg viewBox="-36 -42 72 90"><use href="#sq" fill="#300500"/><text y="10" font-size="28" fill="#f59a34">Ai</text></svg>
<svg viewBox="-36 -42 72 90"><use href="#sq" fill="#460c22"/><text y="10" font-size="28" fill="#ee3e69">Id</text></svg>
<svg viewBox="-36 -42 72 90"><use href="#sq" fill="#a82418"/><path d="M-19 16C-12 4 2-4 1-15c-2-5-6 0-3 6C2 4 10 12 17 9c4-4-4-7-12-5-9 0-17 5-24 12z" fill="none" stroke="#fff" stroke-width="3"/></svg>
<svg viewBox="-36 -42 72 90"><use href="#sq" fill="url(#gm)"/><path d="M-9 12V-14L13-18V8M-9-8L13-12" stroke="#fff" stroke-width="4" fill="none"/><circle cx="-12" cy="13" r="5.500" fill="#fff"/><circle cx="10" cy="9" r="5.500" fill="#fff"/><use href="#dt"/></svg>
<svg viewBox="-36 -42 72 90"><use href="#sq" fill="#de4a38"/><path d="M17 3Q10-3 4 2-1 8 3 15 9 21 18 16V10H11M-16 9h9M-5-8l5 7M12-17v11" stroke="#fff" stroke-width="3.500" fill="none"/></svg>
<svg viewBox="-36 -42 72 90"><use href="#sq" fill="#fff"/><circle r="19" cx="2" fill="#d35230"/><path d="M2 0V-19A19 19 0 0 1 21 0z" fill="#f59b79"/><rect x="-22" y="-10" width="21" height="21" rx="2" fill="#b7472a"/><text x="-11.500" y="6" font-size="16" fill="#fff">P</text></svg>
<svg viewBox="-36 -42 72 90"><use href="#sq" fill="#fff"/><use href="#chr" transform="scale(1.180)"/><use href="#dt"/></svg>
<svg viewBox="-36 -42 72 90"><use href="#sq" fill="#fff"/><g stroke-width="7" stroke-linecap="round"><path d="M-4-15h0M-4-5h-12" stroke="#4cbbea"/><path d="M5-15v10M15-5h0" stroke="#41b281"/><path d="M5 15h0M5 5h11" stroke="#e6ae35"/><path d="M-4 5v10M-15 5h0" stroke="#db2b59"/></g><use href="#dt"/></svg>
<svg viewBox="-36 -42 72 90"><use href="#sq" fill="#fff"/><g opacity=".85"><ellipse cy="-13" rx="7" ry="11" fill="#f09a37"/><ellipse cy="-13" rx="7" ry="11" fill="#f2d03f" transform="rotate(45)"/><ellipse cy="-13" rx="7" ry="11" fill="#b4cf4b" transform="rotate(90)"/><ellipse cy="-13" rx="7" ry="11" fill="#67b685" transform="rotate(135)"/><ellipse cy="-13" rx="7" ry="11" fill="#5e93d0" transform="rotate(180)"/><ellipse cy="-13" rx="7" ry="11" fill="#7a78c0" transform="rotate(225)"/><ellipse cy="-13" rx="7" ry="11" fill="#b574a9" transform="rotate(270)"/><ellipse cy="-13" rx="7" ry="11" fill="#e5645a" transform="rotate(315)"/></g></svg>
<svg viewBox="-36 -42 72 90"><use href="#sq" fill="url(#gc)"/><path d="M-7 12a9 9 0 0 1-4-18 13 13 0 0 1 20-4 12 12 0 0 1 2 22h-10M-6 7l-6-3q0-9 6-8l9 8M8 8c10-2 8-14 0-14-4 0-6 3-8 5" fill="none" stroke="#fff" stroke-width="3.500"/></svg>
<svg style="width:34px" viewBox="-17 -42 34 90"><path d="M3-30V36" stroke="#7c6a66" stroke-width="2"/></svg>
<svg viewBox="-36 -42 72 90"><path d="M-22-27h44V8h-44z" fill="#59aee6"/><path d="M-21-27H6L21-10V31H-21z" fill="#f3f3f4"/><path d="M6-27V-9H21z" fill="#cfcfd2"/></svg>
<svg viewBox="-36 -42 72 90"><rect x="-32" y="-19" width="64" height="38" fill="#e6e6e8"/><rect x="10" y="10" width="20" height="20" rx="5" fill="#fff"/><use href="#chr" transform="translate(20 20) scale(.45)"/></svg>
<svg viewBox="-36 -42 72 90"><rect x="-32" y="-18" width="64" height="37" fill="#f4f4f4"/><rect x="-32" y="-16" width="64" height="12" fill="#111"/><path d="M-32 10H-8v9H-32z" fill="#1f4a36"/><path d="M-32 8H32M-20-4V19M-8-4V19M6-4V19M18-4V10" stroke="#222" stroke-width="2"/><rect x="10" y="10" width="20" height="20" rx="5" fill="#fff"/><use href="#chr" transform="translate(20 20) scale(.45)"/></svg>
<svg viewBox="-36 -42 72 90"><rect x="-32" y="-16" width="64" height="32" fill="#f1f1f1"/><path d="M8-11H30M8-7H30M10-3H30M12 1H30M-28-8H2M-28-2H0M-28 4H2" stroke="#9c9c9c" stroke-width="2"/><rect x="10" y="10" width="20" height="20" rx="5" fill="#3b92f3"/><path d="M21 10h9v20h-8q-2-5-1-8h-3q1-8 3-12z" fill="#e3e9f0"/><path d="M14 24q6 4 12 0" stroke="#1a2a44" fill="none"/></svg>
<svg viewBox="-36 -42 72 90"><rect x="-32" y="-26" width="64" height="52" fill="#f6f6f6"/><rect x="-16" y="-22" width="30" height="42" fill="#a8a8ac"/><path d="M-30 23H12" stroke="#444" stroke-width="4" stroke-dasharray="5 2"/><rect x="10" y="10" width="20" height="20" rx="5" fill="#4fc44a"/><use href="#wa" transform="translate(20 20) scale(.36)"/></svg>
<svg viewBox="-36 -42 72 90"><path d="M-22-22H22L17 27Q0 33-17 27z" fill="#dedede" opacity=".95"/><path d="M-21-22l4-8 8 3 6-6 7 5 7-4 5 5 5 5-4 5H-17z" fill="#8b8e92"/><path d="M-14-25l5 5M2-28l4 8M12-26l-4 6" stroke="#fff" stroke-width="3"/></svg>
</footer>
</div>
</body>
</html>
